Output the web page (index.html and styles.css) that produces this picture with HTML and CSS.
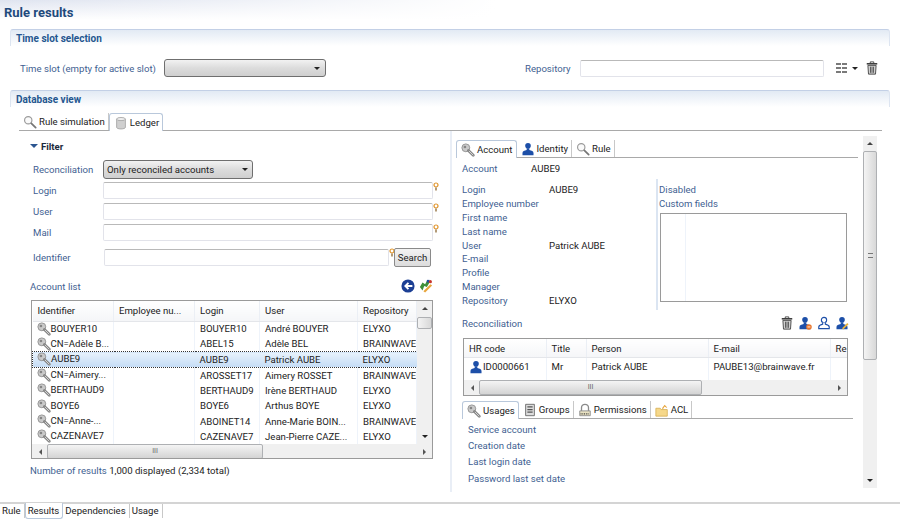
FILE: index.html
```html
<!DOCTYPE html>
<html lang="en">
<head>
    <meta charset="UTF-8">
    <title>Rule results</title>
    <link rel="stylesheet" href="styles.css">
</head>
<body>

<svg class="defs" width="0" height="0">
    <defs>
        <symbol id="i-key" viewBox="0 0 16 16">
            <circle cx="5.500" cy="5.500" r="4.500" fill="#c9c9c9" stroke="#8f8f8f"/>
            <circle cx="4.500" cy="4.500" r="1.500" fill="#858585"/>
            <path d="M8.500 8.500l5.500 5.500" stroke="#858585" stroke-width="3.200" stroke-linecap="round"/>
            <path d="M9 9l5 5" stroke="#dedede"/>
        </symbol>
        <symbol id="i-lens" viewBox="0 0 16 16">
            <circle cx="6" cy="6" r="4.200" fill="#fafafa" stroke="#9a9a9a" stroke-width="1.300"/>
            <path d="M9.500 9.500l5 5" stroke="#777" stroke-width="2" stroke-linecap="round"/>
        </symbol>
        <symbol id="i-db" viewBox="0 0 16 16">
            <path d="M3 3.500v9.500c0 1 2.200 1.800 5 1.800s5-.8 5-1.800V3.500z" fill="#cfcfcf" stroke="#a5a5a5"/>
            <ellipse cx="8" cy="3.500" rx="5" ry="1.800" fill="#efefef" stroke="#a5a5a5"/>
        </symbol>
        <symbol id="i-user" viewBox="0 0 16 16">
            <circle cx="8" cy="4.200" r="3.200" fill="#1d4fa8"/>
            <path d="M6.500 7h3v2.200c2.600.5 4.800 1.600 4.800 3.300V15H1.700v-2.500c0-1.700 2.200-2.800 4.800-3.300z" fill="#1d4fa8"/>
        </symbol>
        <symbol id="i-trash" viewBox="0 0 16 16">
            <path d="M2 3.200h12" stroke="#3f3f3f" stroke-width="1.800"/>
            <path d="M6 2.500V1h4v1.500" fill="none" stroke="#3f3f3f"/>
            <path d="M3.300 5h9.400l-.7 10H4z" fill="#cfcfcf" stroke="#3f3f3f"/>
            <path d="M6.300 6.500v7M8 6.500v7M9.700 6.500v7" stroke="#4f4f4f"/>
        </symbol>
        <symbol id="i-bulb" viewBox="0 0 6 9">
            <circle cx="3" cy="3" r="2" fill="#fff" stroke="#e0942a" stroke-width="1.200"/>
            <path d="M3 5.500v3" stroke="#9a7a4a" stroke-width="1.500"/>
        </symbol>
    </defs>
</svg>

<div class="editor">
    <h1 class="page-title">Rule results</h1>

    <section class="section">
        <h2 class="section-bar">Time slot selection</h2>
        <div class="slot-row">
            <span class="lbl slot-lbl">Time slot (empty for active slot)</span>
            <span class="combo slot-combo"><i class="arrow"></i></span>
            <span class="lbl repo-lbl">Repository</span>
            <span class="field repo-field"></span>
            <span class="grid-btn"><i></i><i></i><i></i><i></i><i></i><i></i></span>
            <i class="arrow menu-arrow"></i>
            <svg class="ic"><use href="#i-trash"/></svg>
        </div>
    </section>

    <section class="section">
        <h2 class="section-bar">Database view</h2>
        <div class="tabs db-tabs">
            <span class="tab"><svg class="ic"><use href="#i-lens"/></svg>Rule simulation</span>
            <span class="tab active"><svg class="ic"><use href="#i-db"/></svg>Ledger</span>
        </div>

        <div class="panes">
            <div class="left-pane">
                <div class="filter-head"><i class="arrow blue"></i>Filter</div>
                <div class="filter-row first">
                    <span class="lbl filter-lbl">Reconciliation</span>
                    <span class="combo filter-combo">Only reconciled accounts<i class="arrow"></i></span>
                </div>
                <div class="filter-row">
                    <span class="lbl filter-lbl">Login</span>
                    <span class="field filter-field"></span>
                    <svg class="bulb"><use href="#i-bulb"/></svg>
                </div>
                <div class="filter-row">
                    <span class="lbl filter-lbl">User</span>
                    <span class="field filter-field"></span>
                    <svg class="bulb"><use href="#i-bulb"/></svg>
                </div>
                <div class="filter-row">
                    <span class="lbl filter-lbl">Mail</span>
                    <span class="field filter-field"></span>
                    <svg class="bulb"><use href="#i-bulb"/></svg>
                </div>
                <div class="filter-row ident-row">
                    <span class="lbl ident-lbl">Identifier</span>
                    <span class="field ident-field"></span>
                    <svg class="bulb"><use href="#i-bulb"/></svg>
                    <span class="btn">Search</span>
                </div>

                <div class="list-head">
                    <span class="lbl">Account list</span>
                    <span class="list-tools">
                        <svg class="ic" viewBox="0 0 16 16"><circle cx="8" cy="8" r="7.500" fill="#1c3f94"/><path d="M13 8H6M8.500 4.500L5 8l3.500 3.500" fill="none" stroke="#fff" stroke-width="2.200"/></svg>
                        <svg class="ic" viewBox="0 0 16 16"><path d="M1 9l3-5 3 2 2-4 3 2-3 5-3-1-2 5z" fill="#3f8f3a"/><path d="M5 14l8-8 2 1.500-8 8z" fill="#e8a53c"/><path d="M9 1h3v3H9z" fill="#1d4fa8"/><circle cx="13" cy="3" r="1.800" fill="#c8342c"/></svg>
                    </span>
                </div>

                <div class="table account-table">
                    <div class="table-body">
                        <table>
                            <thead>
                                <tr><th class="c-id">Identifier</th><th class="c-emp">Employee nu...</th><th class="c-login">Login</th><th class="c-user">User</th><th class="c-repo">Repository</th></tr>
                            </thead>
                            <tbody>
                                <tr><td><svg class="ic"><use href="#i-key"/></svg>BOUYER10</td><td></td><td>BOUYER10</td><td>André BOUYER</td><td>ELYXO</td></tr>
                                <tr><td><svg class="ic"><use href="#i-key"/></svg>CN=Adèle B...</td><td></td><td>ABEL15</td><td>Adèle BEL</td><td>BRAINWAVE</td></tr>
                                <tr class="selected"><td><svg class="ic"><use href="#i-key"/></svg>AUBE9</td><td></td><td>AUBE9</td><td>Patrick AUBE</td><td>ELYXO</td></tr>
                                <tr><td><svg class="ic"><use href="#i-key"/></svg>CN=Aimery...</td><td></td><td>AROSSET17</td><td>Aimery ROSSET</td><td>BRAINWAVE</td></tr>
                                <tr><td><svg class="ic"><use href="#i-key"/></svg>BERTHAUD9</td><td></td><td>BERTHAUD9</td><td>Irène BERTHAUD</td><td>ELYXO</td></tr>
                                <tr><td><svg class="ic"><use href="#i-key"/></svg>BOYE6</td><td></td><td>BOYE6</td><td>Arthus BOYE</td><td>ELYXO</td></tr>
                                <tr><td><svg class="ic"><use href="#i-key"/></svg>CN=Anne-...</td><td></td><td>ABOINET14</td><td>Anne-Marie BOIN...</td><td>BRAINWAVE</td></tr>
                                <tr><td><svg class="ic"><use href="#i-key"/></svg>CAZENAVE7</td><td></td><td>CAZENAVE7</td><td>Jean-Pierre CAZE...</td><td>ELYXO</td></tr>
                            </tbody>
                        </table>
                        <div class="vscroll list-vscroll">
                            <i class="arrow up"></i>
                            <span class="vthumb list-thumb"></span>
                            <i class="arrow"></i>
                        </div>
                    </div>
                    <div class="hscroll">
                        <i class="arrow left"></i>
                        <span class="hthumb list-hthumb">III</span>
                        <i class="arrow right"></i>
                    </div>
                </div>

                <div class="results-line"><span class="lbl">Number of results</span> 1,000 displayed (2,334 total)</div>
            </div>

            <div class="right-pane">
                <div class="right-content">
                    <div class="tabs detail-tabs">
                        <span class="tab active"><svg class="ic"><use href="#i-key"/></svg>Account</span>
                        <span class="tab"><svg class="ic"><use href="#i-user"/></svg>Identity</span>
                        <span class="tab"><svg class="ic"><use href="#i-lens"/></svg>Rule</span>
                    </div>
                    <div class="account-line"><span class="lbl">Account</span><span>AUBE9</span></div>

                    <div class="details">
                        <dl class="detail-list">
                            <dt class="lbl">Login</dt><dd>AUBE9</dd>
                            <dt class="lbl">Employee number</dt><dd></dd>
                            <dt class="lbl">First name</dt><dd></dd>
                            <dt class="lbl">Last name</dt><dd></dd>
                            <dt class="lbl">User</dt><dd>Patrick AUBE</dd>
                            <dt class="lbl">E-mail</dt><dd></dd>
                            <dt class="lbl">Profile</dt><dd></dd>
                            <dt class="lbl">Manager</dt><dd></dd>
                            <dt class="lbl">Repository</dt><dd>ELYXO</dd>
                        </dl>
                        <div class="custom">
                            <div class="lbl custom-lbl">Disabled</div>
                            <div class="lbl custom-lbl">Custom fields</div>
                            <div class="custom-box"><span class="custom-col"></span></div>
                        </div>
                    </div>

                    <div class="recon-head">
                        <span class="lbl">Reconciliation</span>
                        <span class="recon-tools">
                            <svg class="ic"><use href="#i-trash"/></svg>
                            <svg class="ic" viewBox="0 0 16 16"><use href="#i-user"/><circle cx="12.500" cy="12.500" r="3.200" fill="#e8752c"/><path d="M10.800 12.500h3.400" stroke="#fff"/></svg>
                            <svg class="ic" viewBox="0 0 16 16"><circle cx="8" cy="4.500" r="3" fill="#fff" stroke="#1d4fa8" stroke-width="1.300"/><path d="M6.500 7.500v1.800C4 10 2 11 2 12.500V14.500h12v-2c0-1.500-2-2.500-4.500-3.200V7.500" fill="#fff" stroke="#1d4fa8" stroke-width="1.300"/></svg>
                            <svg class="ic" viewBox="0 0 16 16"><use href="#i-user"/><path d="M8 14l6-6 1.500 1.500-6 6z" fill="#e8b13c"/></svg>
                        </span>
                    </div>

                    <div class="table recon-table">
                        <table>
                            <thead>
                                <tr><th class="c-hr">HR code</th><th class="c-title">Title</th><th class="c-person">Person</th><th class="c-mail">E-mail</th><th class="c-re">Re</th></tr>
                            </thead>
                            <tbody>
                                <tr><td><svg class="ic"><use href="#i-user"/></svg>ID0000661</td><td>Mr</td><td>Patrick AUBE</td><td>PAUBE13@brainwave.fr</td><td></td></tr>
                            </tbody>
                        </table>
                        <div class="hscroll">
                            <i class="arrow left"></i>
                            <span class="hthumb recon-hthumb">III</span>
                            <i class="arrow right"></i>
                        </div>
                    </div>

                    <div class="tabs usage-tabs">
                        <span class="tab active"><svg class="ic"><use href="#i-key"/></svg>Usages</span>
                        <span class="tab"><svg class="ic" viewBox="0 0 16 16"><path d="M3 1.500h10v13H3z" fill="#ddd" stroke="#666"/><path d="M5 4.500h6M5 7.500h6M5 10.500h6" stroke="#555" stroke-width="1.300"/></svg>Groups</span>
                        <span class="tab"><svg class="ic" viewBox="0 0 16 16"><path d="M4 9V5.500a4 4 0 0 1 8 0V9" fill="none" stroke="#8a8a8a" stroke-width="1.500"/><path d="M2 9h12v5.500H2z" fill="#e9e2c2" stroke="#8a8a8a"/><path d="M3 12.500h10" stroke="#333" stroke-dasharray="1 1" stroke-width="1.500"/></svg>Permissions</span>
                        <span class="tab"><svg class="ic" viewBox="0 0 16 16"><path d="M1 6h5l1 1.500h7V15H1z" fill="#f6d88a" stroke="#d9b25a"/><path d="M8 6l3-4 3 3-1 .5-2-1.500-2 3z" fill="#e8a53c"/></svg>ACL</span>
                    </div>
                    <div class="usage-list">
                        <div class="lbl">Service account</div>
                        <div class="lbl">Creation date</div>
                        <div class="lbl">Last login date</div>
                        <div class="lbl">Password last set date</div>
                    </div>
                </div>
                <div class="vscroll page-vscroll">
                    <i class="arrow up"></i>
                    <span class="vthumb page-thumb"><b></b></span>
                    <i class="arrow"></i>
                </div>
            </div>
        </div>
    </section>
</div>

<div class="bottom-tabs">
    <span class="btab">Rule</span>
    <span class="btab active">Results</span>
    <span class="btab">Dependencies</span>
    <span class="btab">Usage</span>
</div>

</body>
</html>
```

FILE: styles.css
```css
* {
    box-sizing: border-box;
}
html, body {
    margin: 0;
    height: 522px;
    overflow: hidden;
}
body {
    font-family: Roboto, "Open Sans", Arial, sans-serif;
    font-size: 9.600px;
    color: #222;
    background: #fff;
}
.defs {
    display: block;
    height: 0;
}
.ic {
    width: 16px;
    height: 16px;
    flex: none;
    vertical-align: middle;
}
.lbl {
    color: #3f5f92;
    white-space: nowrap;
}

.editor {
    height: 502px;
    overflow: hidden;
    background:
        linear-gradient(to right, rgba(255, 255, 255, 0), #fff 55%),
        linear-gradient(#dfe4f0 0, #fff 20px);
}
.page-title {
    margin: 0;
    height: 29px;
    padding: 4px 0 0 4px;
    font-size: 13px;
    line-height: 17px;
    font-weight: 700;
    color: #1f4a7c;
}
.section {
    margin: 0 10px;
}
.section-bar {
    margin: 0;
    height: 17px;
    padding: 2px 0 0 5px;
    font-size: 10px;
    line-height: 13px;
    font-weight: 700;
    color: #24568f;
    border: 1px solid #c3d0e6;
    border-bottom: 0;
    border-left-color: #dde5f1;
    border-right-color: #dde5f1;
    border-radius: 3px 3px 0 0;
    background: linear-gradient(#e2eaf4, #fff);
}

.slot-row {
    height: 44px;
    display: flex;
    align-items: center;
    padding: 0 10px;
}
.slot-lbl {
    width: 144px;
}
.combo {
    display: flex;
    align-items: center;
    justify-content: space-between;
    border: 1px solid #6f6f6f;
    border-radius: 3px;
    background: linear-gradient(#f2f2f2, #dcdcdc 50%, #cfcfcf);
}
.slot-combo {
    width: 162px;
    height: 18px;
    padding: 0 5px;
    justify-content: flex-end;
}
.arrow {
    display: block;
    flex: none;
    width: 0;
    height: 0;
    border-left: 3px solid transparent;
    border-right: 3px solid transparent;
    border-top: 3px solid #222;
}
.arrow.up {
    border-top: 0;
    border-bottom: 3px solid #444;
}
.arrow.left {
    border: 3px solid transparent;
    border-left: 0;
    border-right: 3px solid #555;
}
.arrow.right {
    border: 3px solid transparent;
    border-right: 0;
    border-left: 3px solid #555;
}
.arrow.blue {
    border-top-color: #2b5590;
    border-left-width: 4px;
    border-right-width: 4px;
    border-top-width: 4px;
    margin-right: 3px;
}
.repo-lbl {
    margin-left: 199px;
    width: 55px;
}
.field {
    display: block;
    height: 17px;
    border: 1px solid #e2e3ea;
    border-top-color: #b9b9b9;
    border-radius: 2px;
    background: #fff;
}
.repo-field {
    width: 244px;
}
.grid-btn {
    margin-left: 12px;
    width: 11px;
    height: 10px;
    display: grid;
    grid-template-columns: 5px 5px;
    grid-template-rows: 2px 2px 2px;
    gap: 2px 1px;
}
.grid-btn i {
    background: #7a7a7a;
}
.menu-arrow {
    margin-left: 5px;
}
.slot-row .ic {
    width: 14px;
    height: 14px;
    margin-left: 7px;
}

.tabs {
    display: flex;
    border-bottom: 1px solid #a9a9a9;
}
.tab {
    display: flex;
    align-items: center;
    height: 17px;
    padding: 0 3px 0 4px;
    border-right: 1px solid #c8c8c8;
    white-space: nowrap;
    color: #222;
}
.tab .ic {
    width: 14px;
    height: 14px;
    margin-right: 2px;
}
.tab.active {
    height: 18px;
    margin-bottom: -1px;
    background: #fff;
    border: 1px solid #b9c8db;
    border-bottom: 0;
    border-radius: 3px 3px 0 0;
}
.db-tabs {
    margin: 6px 8px 0 9px;
    height: 18px;
}

.panes {
    display: flex;
    height: 361px;
}
.left-pane {
    width: 442px;
    padding: 8px 0 0 20px;
    border-right: 2px solid #e9eef6;
    flex: none;
}
.filter-head {
    display: flex;
    align-items: center;
    height: 14px;
    font-weight: 700;
    color: #1c2a3d;
}
.filter-row {
    display: flex;
    align-items: center;
    height: 21px;
}
.filter-row.first {
    margin-top: 6px;
    height: 20px;
    margin-bottom: 1px;
}
.filter-lbl {
    width: 73px;
    padding-left: 3px;
}
.filter-combo {
    width: 150px;
    height: 19px;
    padding: 0 4px 0 3px;
}
.filter-field {
    width: 330px;
}
.bulb {
    width: 6px;
    height: 9px;
    align-self: flex-start;
    margin-top: 2px;
}
.ident-row {
    height: 24px;
    margin-top: 2px;
}
.ident-lbl {
    width: 74px;
    padding-left: 3px;
}
.ident-field {
    width: 285px;
}
.ident-row .bulb {
    margin-top: 3px;
}
.btn {
    width: 37px;
    height: 19px;
    line-height: 17px;
    text-align: center;
    border: 1px solid #8a8a8a;
    border-radius: 2px;
    background: linear-gradient(#f3f3f3, #dcdcdc);
    margin-left: -1px;
}
.list-head {
    display: flex;
    align-items: center;
    justify-content: space-between;
    height: 20px;
    margin-top: 7px;
    width: 403px;
}
.list-tools {
    display: flex;
    gap: 4px;
}
.list-tools .ic {
    width: 14px;
    height: 14px;
}

.table {
    border: 1px solid #9a9a9a;
    background: #fff;
    overflow: hidden;
}
table {
    border-collapse: collapse;
    table-layout: fixed;
    flex: none;
}
th {
    height: 20px;
    padding: 0 5px;
    text-align: left;
    font-weight: 400;
    border-right: 1px solid #ebeff5;
    border-bottom: 1px solid #e4e6ea;
    background: linear-gradient(#fff, #f5f6f8);
    white-space: nowrap;
    overflow: hidden;
}
td {
    height: 15.400px;
    padding: 0 5px;
    white-space: nowrap;
    overflow: hidden;
    border-right: 1px solid #eef3fa;
}
td .ic {
    width: 14px;
    height: 14px;
}
.account-table {
    width: 402px;
    height: 159px;
    margin: 4px 0 0 1px;
}
.table-body {
    display: flex;
    height: 143px;
}
.account-table table {
    width: 384px;
}
.c-id { width: 81px; }
.c-emp { width: 81px; }
.c-login { width: 65px; }
.c-user { width: 98px; }
.c-repo { width: 59px; }
.account-table td:first-child {
    padding-left: 4px;
}
.account-table td:last-child,
.account-table th:last-child {
    padding-right: 0;
}
tr.selected td {
    background: linear-gradient(#e8f2fc, #c4dcf5);
    border-top: 1px dotted #333;
    border-bottom: 1px dotted #333;
    border-right: 0;
}
tr.selected td:first-child {
    border-left: 1px dotted #333;
}

.vscroll {
    display: flex;
    flex-direction: column;
    align-items: center;
    justify-content: space-between;
    background: #f0f0f0;
    padding: 6px 0;
    position: relative;
}
.list-vscroll {
    width: 15px;
    flex: none;
}
.vthumb {
    width: 100%;
    display: flex;
    align-items: center;
    justify-content: center;
    border: 1px solid #aeb0b3;
    border-radius: 2px;
    background: linear-gradient(90deg, #f4f4f4, #d8d8d8);
    position: absolute;
    left: 0;
}
.vthumb b {
    width: 5px;
    height: 5px;
    border-top: 1px solid #777;
    border-bottom: 1px solid #777;
}
.list-thumb {
    top: 16px;
    height: 12px;
}
.hscroll {
    display: flex;
    align-items: center;
    justify-content: space-between;
    height: 15px;
    padding: 0 6px 0 7px;
    background: #f0f0f0;
    position: relative;
}
.hthumb {
    position: absolute;
    left: 15px;
    top: 0;
    height: 100%;
    border: 1px solid #aeb0b3;
    border-radius: 2px;
    background: linear-gradient(#f4f4f4, #d4d4d4);
    color: #666;
    font-size: 7px;
    line-height: 13px;
    text-align: center;
}
.list-hthumb {
    width: 216px;
}
.results-line {
    margin-top: 6px;
}

.right-pane {
    flex: 1;
    display: flex;
    min-width: 0;
    padding-left: 4px;
}
.right-content {
    width: 407px;
    flex: none;
}
.detail-tabs {
    margin-top: 9px;
    height: 18px;
    width: 402px;
}
.account-line {
    display: flex;
    height: 15px;
    margin-top: 3px;
    align-items: center;
    padding-left: 6px;
}
.account-line .lbl {
    width: 69px;
}
.details {
    display: flex;
    margin-top: 3px;
    height: 131px;
}
.detail-list {
    margin: 0;
    width: 202px;
    padding: 4px 0 0 6px;
    display: grid;
    grid-template-columns: 87px 1fr;
    grid-auto-rows: 13.800px;
    align-items: center;
    border-right: 2px solid #dbe5f2;
}
dd {
    margin: 0;
}
.custom {
    padding: 4px 0 0 1px;
    width: 190px;
}
.custom-lbl {
    height: 13.800px;
    line-height: 14px;
}
.custom-box {
    margin: 2px 0 0 1px;
    width: 187px;
    height: 89px;
    border: 1px solid #9a9a9a;
    display: flex;
}
.custom-col {
    width: 25px;
    border-right: 1px solid #eef3fa;
}
.recon-head {
    display: flex;
    justify-content: space-between;
    align-items: center;
    height: 18px;
    margin-top: 4px;
    padding-left: 6px;
    width: 393px;
}
.recon-tools {
    display: flex;
    gap: 4.500px;
}
.recon-tools .ic {
    width: 14px;
    height: 14px;
}
.recon-table {
    margin: 6px 0 0 7px;
    width: 385px;
    height: 58px;
}
.recon-table table {
    width: 424px;
}
.c-hr { width: 82px; }
.c-title { width: 40px; }
.c-person { width: 122px; }
.c-mail { width: 122px; }
.c-re { width: 58px; }
.recon-table th {
    height: 18px;
    padding-top: 2px;
}
.recon-table td {
    height: 23px;
    padding-bottom: 4px;
}
.recon-hthumb {
    width: 223px;
}
.usage-tabs {
    margin: 5px 0 0 6px;
    width: 391px;
    height: 18px;
}
.usage-list {
    padding: 3px 0 0 12px;
}
.usage-list .lbl {
    height: 16.200px;
    line-height: 16px;
}
.page-vscroll {
    width: 14px;
    flex: none;
    margin-top: 5px;
    height: 352px;
}
.page-thumb {
    top: 15px;
    height: 209px;
}

.bottom-tabs {
    height: 20px;
    border-top: 2px solid #d4d4d4;
    display: flex;
}
.btab {
    padding: 0 3px 0 2px;
    height: 14px;
    line-height: 14px;
    border-right: 1px solid #c8c8c8;
}
.btab.active {
    height: 16px;
    margin-top: -1px;
    padding: 1px 3px 0 2px;
    border: 1px solid #b9c8db;
    border-top: 0;
    border-radius: 0 0 3px 3px;
    background: #fff;
}
```
